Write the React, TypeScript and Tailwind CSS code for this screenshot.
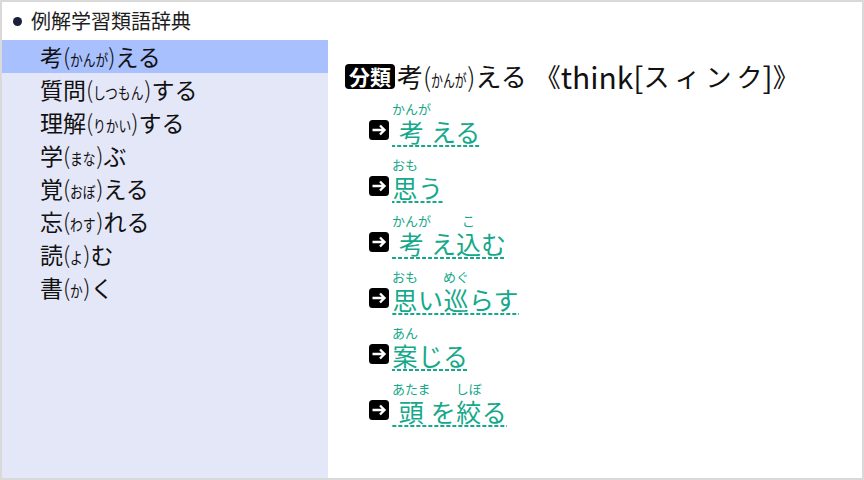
const words = ["考(かんが)える", "質問(しつもん)する", "理解(りかい)する", "学(まな)ぶ", "覚(おぼ)える", "忘(わす)れる", "読(よ)む", "書(か)く"];

type Part = [string, string?];

const entries: Part[][] = [
    [["考", "かんが"], ["える"]],
    [["思", "おも"], ["う"]],
    [["考", "かんが"], ["え"], ["込", "こ"], ["む"]],
    [["思", "おも"], ["い"], ["巡", "めぐ"], ["らす"]],
    [["案", "あん"], ["じる"]],
    [["頭", "あたま"], ["を"], ["絞", "しぼ"], ["る"]],
];

// 読みがなは細長いかなで詰めて表示
function Kana({ text, size, scale }: { text: string; size: number; scale: number }) {
    const w = Math.round(text.length * size * scale);
    return (
        <span className="inline-block overflow-visible whitespace-nowrap align-baseline" style={{ width: w }}>
            <span className="inline-block origin-left" style={{ fontSize: size, transform: `scaleX(${scale})` }}>
                {text}
            </span>
        </span>
    );
}

function Word({ text, size, scale }: { text: string; size: number; scale: number }) {
    const m = text.match(/^(.*?)\((.*?)\)(.*)$/);
    if (!m) return <>{text}</>;
    return (
        <>
            {m[1]}
            <span className="font-light">(</span>
            <Kana text={m[2]} size={size} scale={scale} />
            <span className="font-light">)</span>
            {m[3]}
        </>
    );
}

function ArrowBox() {
    return (
        <svg width="20" height="20" viewBox="0 0 20 20" className="shrink-0">
            <rect x="0" y="0" width="20" height="20" rx="3.5" fill="#000" />
            <path d="M3.5 10h12M11 5.5l4.5 4.5-4.5 4.5" stroke="#fff" strokeWidth="2.4" fill="none" />
        </svg>
    );
}

function Entry({ parts }: { parts: Part[] }) {
    return (
        <div className="flex items-end gap-[3px] h-[56px]">
            <div className="mb-[7px]">
                <ArrowBox />
            </div>
            <span className="inline-flex items-end text-[#15a88a] pb-[2px] bg-[linear-gradient(to_right,#15a88a_62%,transparent_62%)] bg-[length:6px_2px] bg-bottom bg-repeat-x">
                {parts.map(([base, rt], i) => (
                    <span key={i} className="flex flex-col items-center">
                        {rt && <span className="text-[13px] leading-[14px] h-[14px] mb-[1px] whitespace-nowrap">{rt}</span>}
                        <span className="text-[25px] leading-[28px] whitespace-nowrap">{base}</span>
                    </span>
                ))}
            </span>
        </div>
    );
}

export default function App() {
    return (
        <div
            className="w-[864px] h-[480px] border-2 border-[#d9d9d9] bg-white flex flex-col text-[#111] overflow-hidden"
            style={{ fontFamily: '"Noto Sans CJK JP", "Noto Sans", sans-serif' }}
        >
            <div className="h-[38px] shrink-0 flex items-center pl-[11px] gap-[9px]">
                <span className="w-[9px] h-[9px] rounded-full bg-[#1b1f3b]" />
                <span className="text-[20px] leading-none text-[#1d1d1d]">例解学習類語辞典</span>
            </div>
            <div className="flex flex-1 min-h-0">
                <div className="w-[326px] shrink-0 bg-[#e4e7f7]">
                    {words.map((w, i) => (
                        <div
                            key={w}
                            className={`h-[33px] flex items-center pl-[38px] text-[23px] leading-none whitespace-nowrap ${i === 0 ? "bg-[#a9c0ff]" : ""}`}
                        >
                            <Word text={w} size={16} scale={0.8} />
                        </div>
                    ))}
                </div>
                <div className="flex-1 pl-[17px] pt-[23px]">
                    <div className="flex items-center h-[26px] leading-none whitespace-nowrap">
                        <span className="bg-black text-white text-[21px] font-bold rounded-[4px] px-[4px] h-[25px] flex items-center mr-[2px]">
                            分類
                        </span>
                        <span className="text-[26px]">
                            <Word text="考(かんが)える" size={17} scale={0.7} />
                        </span>
                        <span className="text-[26px] ml-[8px]">《</span>
                        <span className="text-[30px]">think[</span>
                        <span className="text-[26px]">
                            <span className="tracking-[5px]">スィン</span>ク
                        </span>
                        <span className="text-[30px]">]</span>
                        <span className="text-[26px]">》</span>
                    </div>
                    <div className="pl-[24px] pt-[2px] flex flex-col">
                        {entries.map((e, i) => (
                            <Entry key={i} parts={e} />
                        ))}
                    </div>
                </div>
            </div>
        </div>
    );
}
